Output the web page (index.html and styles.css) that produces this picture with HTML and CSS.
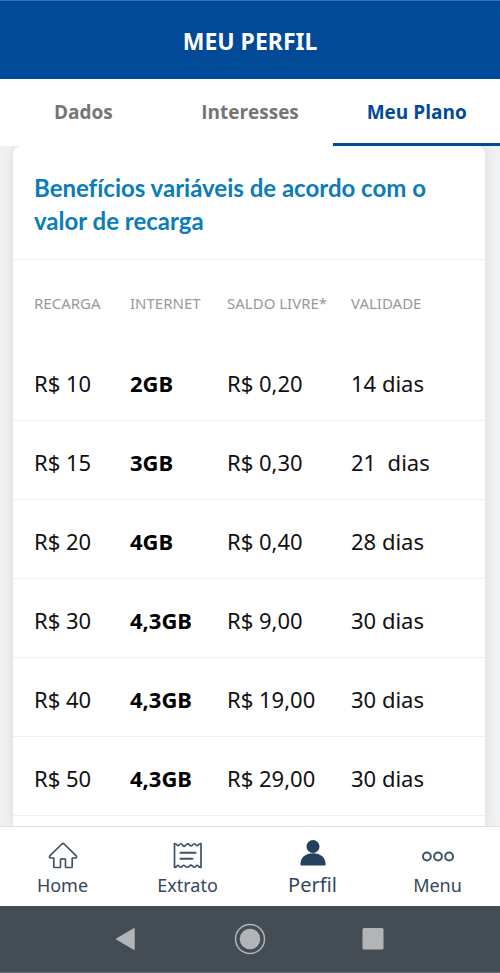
FILE: index.html
```html
<!DOCTYPE html>
<html lang="pt-BR">
<head>
<meta charset="utf-8">
<meta name="viewport" content="width=device-width, initial-scale=1">
<title>Meu Perfil</title>
<link rel="stylesheet" href="styles.css">
</head>
<body>
<header class="header"><h1>MEU PERFIL</h1></header>
<nav class="tabs">
  <a class="tab" href="#dados">Dados</a>
  <a class="tab" href="#interesses">Interesses</a>
  <a class="tab active" href="#plano" aria-current="page">Meu Plano</a>
</nav>
<main class="content">
  <section class="card">
    <h2>Benefícios variáveis de acordo com o valor de recarga</h2>
    <table class="plans">
      <colgroup><col class="c-recarga"><col class="c-internet"><col class="c-saldo"><col></colgroup>
      <thead>
        <tr><th>RECARGA</th><th>INTERNET</th><th>SALDO LIVRE*</th><th>VALIDADE</th></tr>
      </thead>
      <tbody>
        <tr><td>R$ 10</td><td><b>2GB</b></td><td>R$ 0,20</td><td>14 dias</td></tr>
        <tr><td>R$ 15</td><td><b>3GB</b></td><td>R$ 0,30</td><td>21&nbsp; dias</td></tr>
        <tr><td>R$ 20</td><td><b>4GB</b></td><td>R$ 0,40</td><td>28 dias</td></tr>
        <tr><td>R$ 30</td><td><b>4,3GB</b></td><td>R$ 9,00</td><td>30 dias</td></tr>
        <tr><td>R$ 40</td><td><b>4,3GB</b></td><td>R$ 19,00</td><td>30 dias</td></tr>
        <tr><td>R$ 50</td><td><b>4,3GB</b></td><td>R$ 29,00</td><td>30 dias</td></tr>
      </tbody>
    </table>
  </section>
</main>
<nav class="bottom">
  <a class="item" href="#home">
    <svg width="32" height="32" viewBox="0 0 32 32" fill="none" stroke="#3f5266" stroke-width="1.7" stroke-linejoin="round"><path d="M14.900 4 2.800 15.800q-1 2 1 2.200H6.800v8.500q0 1 1 1h4.700q1 0 1-1v-6.700q0-1 1-1h3q1 0 1 1v6.700q0 1 1 1h4.700q1 0 1-1V18h3q2-.2 1-2.200L17.100 4q-1.100-1-2.200 0Z"/></svg>
    <span>Home</span>
  </a>
  <a class="item" href="#extrato">
    <svg width="32" height="32" viewBox="0 0 32 32" fill="none" stroke="#3f5266" stroke-width="1.700" stroke-linejoin="round" stroke-linecap="round"><path d="M2.500 3.500q1.500 0 2.500 1.500 1 1.200 2 0 2-2.500 3.500 0 1 2 2.500 1 2.500-3.500 4.500-1 1.500 2 3 0 2-2.500 3.500 0 1 1.500 2.300 0 1-1.500 2.700-1.500v24q-1.700 0-2.700-1.500-1.300-1.500-2.300 0-1.500 2.500-3.500 0-1.500-1.500-3 0-2 2.500-4.500 0-1.500-1.500-2.500 0-1.500 2.500-3.500 0-1-1.200-2 0-1 1.500-2.500 1.500Z"/><path d="M8.500 12.700h15M8.500 18.700h12" stroke-width="2"/></svg>
    <span>Extrato</span>
  </a>
  <a class="item current" href="#perfil" aria-current="page">
    <svg width="32" height="32" viewBox="0 0 32 32" fill="#24405a"><circle cx="16" cy="9.500" r="6.500"/><path d="M3.500 28.500v-2c0-6 5-10.300 12.500-10.300s12.500 4.300 12.500 10.300v2Z"/></svg>
    <span>Perfil</span>
  </a>
  <a class="item" href="#menu">
    <svg width="32" height="32" viewBox="0 0 32 32" fill="none" stroke="#3f5266" stroke-width="2"><circle cx="4.900" cy="16.500" r="3.900"/><circle cx="16" cy="16.500" r="3.900"/><circle cx="27.100" cy="16.500" r="3.900"/></svg>
    <span>Menu</span>
  </a>
</nav>
<div class="system">
  <button type="button" aria-label="Voltar"><svg width="32" height="32" viewBox="0 0 32 32"><path d="M5.200 16 23.200 5.400v21.200Z" fill="#b1b5b8" stroke="#b1b5b8" stroke-linejoin="round"/></svg></button>
  <button type="button" aria-label="Início"><svg width="32" height="32" viewBox="0 0 32 32"><circle cx="16" cy="16" r="14.500" fill="none" stroke="#b1b5b8" stroke-width="1.500"/><circle cx="16" cy="16" r="10.300" fill="#b1b5b8"/></svg></button>
  <button type="button" aria-label="Recentes"><svg width="32" height="32" viewBox="0 0 32 32"><rect x="5.500" y="5" width="21" height="21.500" rx="1.500" fill="#b1b5b8"/></svg></button>
</div>
</body>
</html>
```
FILE: styles.css
```css
* { box-sizing: border-box; }
body {
  margin: 0;
  height: 100vh;
  display: flex;
  flex-direction: column;
  background: #f0f1f3;
  color: #111;
  font-family: "Noto Sans", "Open Sans", sans-serif;
}
a { color: inherit; text-decoration: none; }
h1, h2 { margin: 0; }
.header {
  flex: none;
  padding: 24px 0 22px;
  border-top: 1px solid #3970ad;
  background: #004a97;
  color: #fff;
  text-align: center;
}
h1 { font-size: 23px; line-height: 32px; }
.tabs {
  flex: none;
  display: grid;
  grid-template-columns: repeat(3, 1fr);
  background: #fff;
}
.tab {
  padding: 21px 0 19px;
  border-bottom: 3px solid transparent;
  color: #757575;
  font-family: "Open Sans", sans-serif;
  font-size: 19px;
  font-weight: 700;
  line-height: 24px;
  text-align: center;
}
.tab.active { color: #004a97; border-color: #004a97; }
.content {
  flex: 1;
  min-height: 0;
  overflow: hidden;
  padding: 0 15px 0 13px;
}
.card {
  min-height: 100%;
  border-radius: 8px 8px 0 0;
  background: #fff;
  box-shadow: 0 0 12px rgba(0, 0, 0, 0.1);
}
h2 {
  padding: 25px 21px 22px;
  border-bottom: 1px solid #eff1f3;
  color: #0a7cba;
  font-family: Lato, sans-serif;
  font-size: 24px;
  font-variant-ligatures: none;
  line-height: 33px;
}
.plans {
  width: 100%;
  border-spacing: 0;
  table-layout: fixed;
}
.c-recarga { width: 117px; }
.c-internet { width: 97px; }
.c-saldo { width: 124px; }
th, td {
  text-align: left;
  white-space: nowrap;
}
th:first-child, td:first-child { padding-left: 21px; }
th {
  height: 82px;
  padding: 3px 0 0;
  color: #999;
  font-size: 15px;
  font-weight: 400;
}
td {
  height: 79px;
  padding: 3px 0 0;
  border-bottom: 1px solid #eff1f3;
  font-size: 22px;
}
b { color: #000; }
.bottom {
  flex: none;
  display: grid;
  grid-template-columns: repeat(4, 1fr);
  padding: 13px 0 9px;
  border-top: 1px solid #dfe1e4;
  background: #fff;
  color: #34475b;
}
.item {
  display: flex;
  flex-direction: column;
  align-items: center;
  justify-content: space-between;
  height: 57px;
  font-size: 18px;
  line-height: 24px;
}
.current { font-size: 20px; }
.item svg { flex: none; }
.current svg { margin-top: -3px; }
.system {
  flex: none;
  display: flex;
  justify-content: center;
  gap: 91px;
  padding: 17px 0;
  border-bottom: 1px solid #687076;
  background: #444d53;
}
.system button {
  display: flex;
  padding: 0;
  border: 0;
  background: none;
}
```
